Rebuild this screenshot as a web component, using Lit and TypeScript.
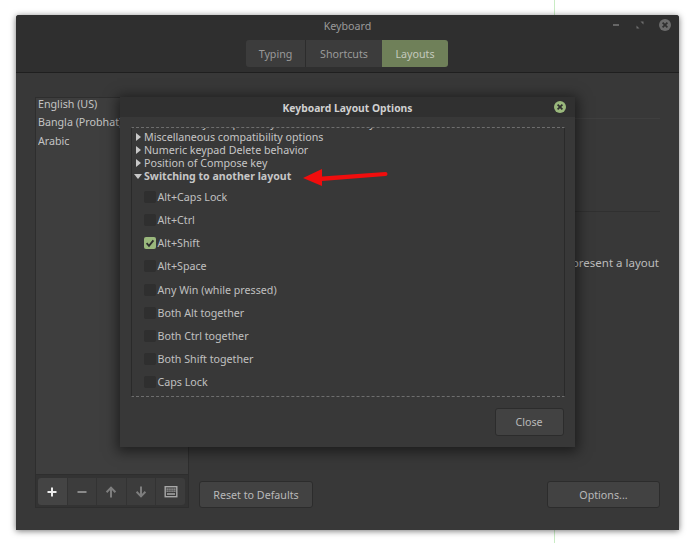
import {LitElement, css, html, svg} from 'lit';
import {customElement} from 'lit/decorators.js';

const OPTIONS = [
	{label: 'Alt+Caps Lock', checked: false},
	{label: 'Alt+Ctrl', checked: false},
	{label: 'Alt+Shift', checked: true},
	{label: 'Alt+Space', checked: false},
	{label: 'Any Win (while pressed)', checked: false},
	{label: 'Both Alt together', checked: false},
	{label: 'Both Ctrl together', checked: false},
	{label: 'Both Shift together', checked: false},
	{label: 'Caps Lock', checked: false},
];

const closeGlyph = svg`<path d="M4.6 4.6l4.8 4.8M9.4 4.6l-4.8 4.8" fill="none" stroke="#2f2f2f" stroke-width="1.7"/>`;

@customElement('app-root')
export class AppRoot extends LitElement {
	render() {
		return html`
			<div class="desktop">
				<div class="guide"></div>
				<section class="window">
					<header class="titlebar">
						<div class="title">Keyboard</div>
						<div class="tabs">
							<span class="tab typing">Typing</span>
							<span class="tab shortcuts">Shortcuts</span>
							<span class="tab layouts">Layouts</span>
						</div>
						<div class="wm">
							<span class="min"></span>
							<svg class="max" width="8" height="8" viewBox="0 0 8 8">
								<path d="M4.5 0.5H7.5V3.5ZM0.5 4.5V7.5H3.5Z" fill="#6e6e6e"/>
							</svg>
							<svg width="14" height="14" viewBox="0 0 14 14">
								<circle cx="7" cy="7" r="6" fill="#6b6b6b"/>
								${closeGlyph}
							</svg>
						</div>
					</header>
					<div class="body">
						<div class="left">
							<ul class="layouts-list">
								<li>English (US)</li>
								<li>Bangla (Probhat)</li>
								<li>Arabic</li>
							</ul>
							<div class="toolbar-wrap">
								<div class="toolbar">
									<span class="tool on">${this.plus()}</span>
									<span class="tool">${this.minus()}</span>
									<span class="tool">${this.up()}</span>
									<span class="tool">${this.down()}</span>
									<span class="tool">${this.kbd()}</span>
								</div>
							</div>
						</div>
						<div class="right">
							<div class="rule first"></div>
							<div class="rule second"></div>
							<p class="hint">represent a layout</p>
							<div class="actions">
								<button class="btn reset">Reset to Defaults</button>
								<button class="btn">Options...</button>
							</div>
						</div>
					</div>
				</section>

				<section class="dialog">
					<header class="dialog-head">
						<span>Keyboard Layout Options</span>
						<svg class="dialog-close" width="14" height="14" viewBox="0 0 14 14">
							<circle cx="7" cy="7" r="6" fill="#9ab87c"/>
							${closeGlyph}
						</svg>
					</header>
					<div class="dialog-body">
						<div class="frame">
							<div class="row scrolled"><i class="arrow"></i>Maintain key compatibility with old Solaris keycodes</div>
							<div class="row"><i class="arrow"></i>Miscellaneous compatibility options</div>
							<div class="row"><i class="arrow"></i>Numeric keypad Delete behavior</div>
							<div class="row"><i class="arrow"></i>Position of Compose key</div>
							<div class="row open"><i class="arrow down"></i>Switching to another layout</div>
							<div class="checks">
								${OPTIONS.map(
									(o) => html`
										<div class="check-row">
											<span class="box ${o.checked ? 'checked' : ''}">
												${o.checked
													? html`<svg width="12" height="12" viewBox="0 0 12 12">
															<path d="M2.6 6.2l2.4 2.6 4.4-5.4" fill="none" stroke="#2d2d2d" stroke-width="1.8"/>
														</svg>`
													: ''}
											</span>
											${o.label}
										</div>
									`
								)}
							</div>
						</div>
						<div class="dialog-actions">
							<button class="btn close">Close</button>
						</div>
					</div>
				</section>

				<svg class="pointer" width="90" height="24" viewBox="0 0 90 24">
					<path d="M1 12L20 3V10.5L83.5 6Q85.5 6 85.5 8Q85.5 10 83.5 10L20 15V20Z" fill="#f10d0d"/>
				</svg>
			</div>
		`;
	}

	private plus() {
		return html`<svg width="14" height="14" viewBox="0 0 14 14"><path d="M7 2.5v9M2.5 7h9" stroke="#ececec" stroke-width="2"/></svg>`;
	}
	private minus() {
		return html`<svg width="14" height="14" viewBox="0 0 14 14"><path d="M2.5 7h9" stroke="#8a8a8a" stroke-width="2"/></svg>`;
	}
	private up() {
		return html`<svg width="14" height="14" viewBox="0 0 14 14"><path d="M7 12.5V3M2.6 7.2L7 2.6 11.4 7.2" fill="none" stroke="#7e7e7e" stroke-width="2"/></svg>`;
	}
	private down() {
		return html`<svg width="14" height="14" viewBox="0 0 14 14"><path d="M7 1.5V11M2.6 6.8L7 11.4 11.4 6.8" fill="none" stroke="#7e7e7e" stroke-width="2"/></svg>`;
	}
	private kbd() {
		return html`<svg width="14" height="14" viewBox="0 0 14 14">
			<rect x="1.2" y="1.7" width="11.6" height="10" fill="none" stroke="#a8a8a8" stroke-width="1.4"/>
			<path d="M2.5 4.2h9M2.5 6.2h9" stroke="#a8a8a8" stroke-width="1.3" stroke-dasharray="1.4 .5"/>
			<path d="M3 9h8" stroke="#a8a8a8" stroke-width="1.3"/>
		</svg>`;
	}

	static styles = css`
		:host {
			display: block;
			font-family: 'Noto Sans', 'Open Sans', sans-serif;
			font-size: 10.7px;
			color: #c8c8c8;
		}

		.desktop {
			position: relative;
			width: 692px;
			height: 543px;
			background: #fff;
			overflow: hidden;
		}

		.guide {
			position: absolute;
			left: 554px;
			top: 0;
			width: 1px;
			height: 543px;
			background: #c9ecc4;
		}

		.window {
			position: absolute;
			left: 16px;
			top: 15px;
			width: 663px;
			height: 515px;
			display: flex;
			flex-direction: column;
			background: #383838;
			border-radius: 3px 3px 0 0;
			box-shadow: 0 1px 6px rgba(0, 0, 0, 0.55);
		}

		.titlebar {
			position: relative;
			height: 58px;
			box-sizing: border-box;
			padding-top: 5px;
			background: #2f2f2f;
			border-bottom: 1px solid #1f1f1f;
			display: flex;
			flex-direction: column;
			align-items: center;
			border-radius: 3px 3px 0 0;
		}

		.title {
			height: 20px;
			line-height: 13px;
			color: #9a9a9a;
		}

		.tabs {
			display: flex;
			height: 27px;
			margin-left: -1px;
			border-radius: 3px;
			overflow: hidden;
		}

		.tab {
			display: flex;
			align-items: center;
			justify-content: center;
			background: #3c3c3c;
			color: #9a9a9a;
			box-sizing: border-box;
		}

		.typing {
			width: 60px;
			border-right: 1px solid #2c2c2c;
		}

		.shortcuts {
			width: 76px;
		}

		.layouts {
			width: 66px;
			background: #6f8059;
			color: #c4c9bd;
		}

		.wm {
			position: absolute;
			right: 7px;
			top: 3px;
			display: flex;
			align-items: center;
		}

		.min {
			width: 6px;
			height: 2px;
			margin-right: 17px;
			background: #666;
		}

		.max {
			margin-right: 14px;
		}

		.body {
			flex: 1;
			display: flex;
			padding: 24px 19px 22px;
			gap: 10px;
		}

		.left {
			width: 154px;
			flex: none;
			display: flex;
			flex-direction: column;
			background: #3e3e3e;
			box-shadow: inset 0 0 0 1px #2e2e2e;
		}

		.layouts-list {
			flex: 1;
			list-style: none;
			margin: 0;
			padding: 0 3px;
			color: #c4c4c4;
		}

		.layouts-list li {
			height: 18.3px;
			line-height: 15px;
			white-space: nowrap;
			overflow: hidden;
		}

		.toolbar-wrap {
			height: 34px;
			box-sizing: border-box;
			padding: 3px 3px 2px 2px;
			background: #333;
			border: 1px solid #2e2e2e;
		}

		.toolbar {
			display: flex;
			height: 27px;
			border-radius: 3px;
			overflow: hidden;
		}

		.tool {
			flex: 1;
			display: flex;
			align-items: center;
			justify-content: center;
			background: #3c3c3c;
			border-left: 1px solid #333;
		}

		.tool:first-child {
			border-left: 0;
		}

		.tool.on {
			background: #444;
		}

		.right {
			flex: 1;
			display: flex;
			flex-direction: column;
		}

		.rule {
			height: 1px;
		}

		.first {
			margin-top: 21px;
			background: #3f3f3f;
		}

		.second {
			margin-top: 92px;
			background: #303030;
		}

		.hint {
			margin: 43px 0 0;
			text-align: right;
			padding-right: 1px;
			line-height: 15px;
			font-size: 11.5px;
			color: #bdbdbd;
		}

		.actions {
			margin-top: auto;
			display: flex;
			justify-content: space-between;
		}

		.btn {
			width: 113px;
			height: 27px;
			padding: 0;
			font: inherit;
			color: #b9b9b9;
			background: #424242;
			border: 1px solid #2c2c2c;
			border-radius: 3px;
		}

		.btn.reset {
			width: 114px;
		}

		.dialog {
			position: absolute;
			left: 120px;
			top: 97px;
			width: 455px;
			height: 350px;
			display: flex;
			flex-direction: column;
			background: #383838;
			box-shadow: 0 2px 12px 3px rgba(0, 0, 0, 0.5);
		}

		.dialog-head {
			position: relative;
			height: 20px;
			flex: none;
			display: flex;
			align-items: center;
			justify-content: center;
			background: #303030;
			font-size: 10.3px;
			font-weight: 700;
			color: #d0d0d0;
			padding-top: 1px;
			box-sizing: border-box;
		}

		.dialog-close {
			position: absolute;
			right: 8px;
			top: 3px;
		}

		.dialog-body {
			flex: 1;
			display: flex;
			flex-direction: column;
			padding: 10px 10px 11px 11px;
		}

		.frame {
			height: 270px;
			box-sizing: border-box;
			overflow: hidden;
			border: 1px dashed #6e6e6e;
			border-left: 1px solid #2a2a2a;
			border-right: 1px solid #2a2a2a;
		}

		.row {
			height: 13px;
			line-height: 13px;
			display: flex;
			align-items: center;
			padding-left: 12px;
			color: #c6c6c6;
			white-space: nowrap;
		}

		/* list is scrolled, only the descenders of this row still show */
		.row.scrolled {
			margin-top: -11px;
			margin-bottom: 0.5px;
		}

		.row.open {
			font-size: 10.6px;
			font-weight: 700;
		}

		.arrow {
			width: 0;
			height: 0;
			margin: 0 3px 0 -8px;
			flex: none;
			border-left: 5px solid #c8c8c8;
			border-top: 4px solid transparent;
			border-bottom: 4px solid transparent;
		}

		.arrow.down {
			margin: 0 2px 0 -10px;
			border-left: 4px solid transparent;
			border-right: 4px solid transparent;
			border-top: 5px solid #c8c8c8;
			border-bottom: 0;
		}

		.checks {
			margin-top: 3px;
		}

		.check-row {
			height: 23.15px;
			display: flex;
			align-items: center;
			gap: 2px;
			padding-left: 11.5px;
			color: #c0c0c0;
			white-space: nowrap;
		}

		.box {
			width: 12px;
			height: 12px;
			display: flex;
			align-items: center;
			justify-content: center;
			background: #2f2f2f;
			border-radius: 2px;
		}

		.box.checked {
			background: #9ab87c;
		}

		.dialog-actions {
			margin-top: auto;
			display: flex;
			justify-content: flex-end;
			padding-right: 1.5px;
		}

		.btn.close {
			width: 69px;
			height: 28px;
		}

		.pointer {
			position: absolute;
			left: 302px;
			top: 166px;
		}
	`;
}

declare global {
	interface HTMLElementTagNameMap {
		'app-root': AppRoot;
	}
}
